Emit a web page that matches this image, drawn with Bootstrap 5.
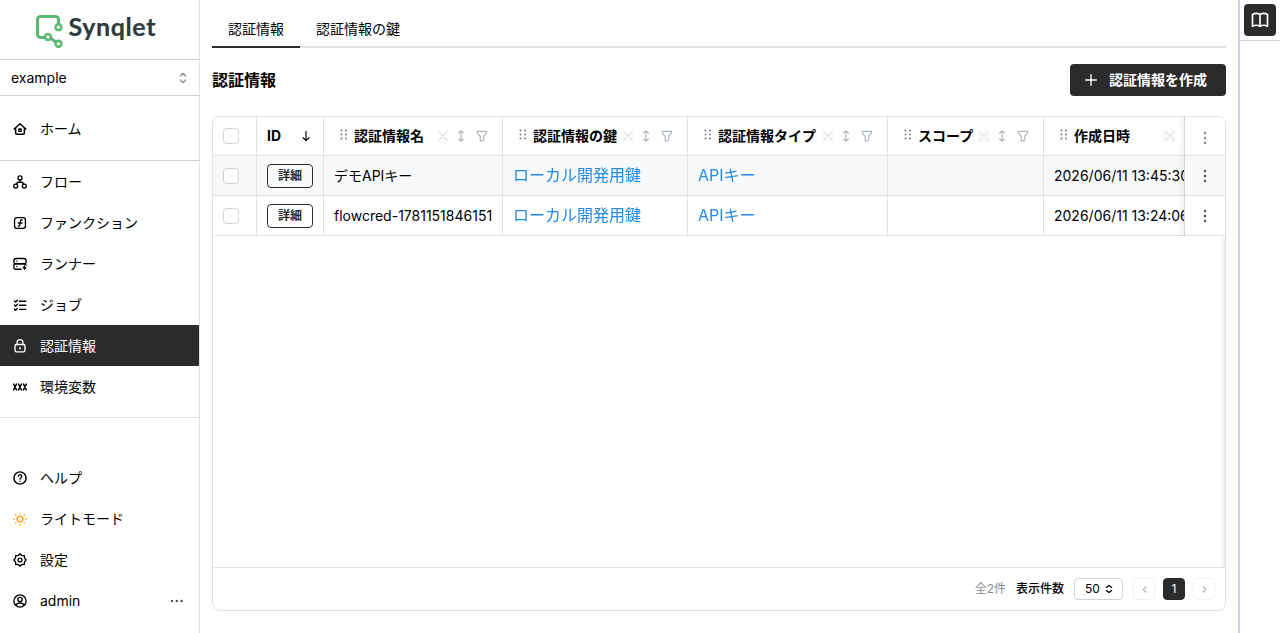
<!DOCTYPE html>
<html lang="ja">
<head>
<meta charset="utf-8">
<meta name="viewport" content="width=device-width, initial-scale=1">
<title>Synqlet</title>
<link href="https://cdn.jsdelivr.net/npm/bootstrap@5.3.0/dist/css/bootstrap.min.css" rel="stylesheet">
<style>
body{font-family:Inter,"Noto Sans CJK JP",sans-serif;font-size:14px;line-height:20px;color:#000;background:#fff}
svg{flex:none;display:block}
.ico{width:16px;height:16px;fill:none;stroke:currentColor;stroke-width:2;stroke-linecap:round;stroke-linejoin:round}
.side{width:200px;border-right:1px solid #dee2e6}
.brand{height:60px;border-bottom:1px solid #ced1da}
.proj{height:36px;border-bottom:1px solid #ced1da;padding:0 8px 0 11px}
.navrow{height:41px;padding:0 13px;gap:13px;color:#000;text-decoration:none}
.navrow .ico{width:14px;height:14px;stroke-width:2.3}
.navrow.active{background:#2b2b2b;color:#fff}
.home-sec{height:65px;border-bottom:1px solid #ced1da;padding-top:12px}
.main-sec{height:257px;border-bottom:1px solid #dee2e6}
.foot-sec{padding-bottom:12px}
.content-area{padding:12px 12px 22px}
.tabbar{height:36px;border-bottom:2px solid #dee2e6}
.tabbar a{height:36px;padding:7px 16px 0;color:#000;text-decoration:none}
.tabbar a.active{border-bottom:2px solid #2b2b2b}
.headline{height:68px;padding-bottom:4px}
.headline h1{font-size:16px;font-weight:700;line-height:24px}
.btn-create{height:32px;width:156px;background:#2b2b2b;color:#fff;border-radius:4px;font-size:14px;font-weight:700;line-height:20px;padding:0 0 0 12px;gap:10px}
.grid-box{border:1px solid #dee2e6;border-radius:8px}
.grid-scroll{overflow:hidden;box-shadow:inset -5px 0 4px -3px rgba(0,0,0,.09)}
.dt{table-layout:fixed;width:1058px;border-collapse:separate;border-spacing:0}
.dt th,.dt td{height:40px;padding:0 10px;border-right:1px solid #dee2e6;border-bottom:1px solid #dee2e6;white-space:nowrap;overflow:hidden;background:#fff;vertical-align:middle}
.dt th{height:39px;font-weight:700}
.dt .alt td{background:#f8f9fb}
.dt .pin{position:sticky;right:0;border-right:0;border-left:1px solid #dee2e6;padding:0;overflow:visible}
.dt .pin:before{content:"";position:absolute;right:100%;top:0;bottom:-1px;width:7px;background:linear-gradient(to left,rgba(0,0,0,.06),transparent)}
.dt .check{border:1px solid #ced4da;border-radius:4px;width:16px;height:16px;margin:1px 0 0;display:block}
.dt th .check{margin:-1px 0 0}
.dt .link{font-size:16px;color:#228be6;text-decoration:none;line-height:24px;position:relative;top:-1px}
.btn-detail{border:1px solid #2b2b2b;border-radius:4px;width:46px;height:24px;font-size:12px;font-weight:600;line-height:21px;padding:0;color:#2b2b2b;display:block}
.grip{color:#777;margin:-2px 6px 0 6px}
.clearer{width:14px;height:14px;background:#fcfcfc;color:#dedede}
.hic{color:#adb5bd}
.hic .h14{width:14px;height:14px;margin-right:3px}
.hic .srt{margin:0 7px 0 4px}
.pager{height:43px;border-top:1px solid #dee2e6;padding-right:10px;font-size:12px;line-height:18px}
.psize{border:1px solid #ced4da;border-radius:4px;width:49px;height:22px;padding-left:10px;gap:3px}
.pbtn{width:22px;height:22px;border-radius:4px;border:1px solid #f1f3f5;color:#adb5bd}
.pbtn .ico{width:15px;height:15px}
.pbtn.on{background:#2b2b2b;border-color:#2b2b2b;color:#fff}
.rail{width:42px;border-left:2px solid #ced1da}
.rail-top{height:41px;border-bottom:1px solid #ced4da;padding:4px}
.rail-btn{width:32px;height:32px;border-radius:4px;background:#2b2b2b;color:#fff}
</style>
</head>
<body class="overflow-hidden">
<svg width="0" height="0" class="position-absolute" aria-hidden="true">
<symbol id="sel" viewBox="0 0 24 24"><path d="M8 9l4-4 4 4M16 15l-4 4-4-4"/></symbol>
<symbol id="selw" viewBox="0 0 16 16"><path d="M4.500 5.900 8 3.200l3.500 2.700M4.500 10.100 8 12.800l3.500-2.700"/></symbol>
<symbol id="grip" viewBox="0 0 8 12"><g fill="currentColor" stroke="none"><circle cx="1.500" cy="1.500" r=".95"/><circle cx="6" cy="1.500" r=".95"/><circle cx="1.500" cy="5.500" r=".95"/><circle cx="6" cy="5.500" r=".95"/><circle cx="1.500" cy="9.500" r=".95"/><circle cx="6" cy="9.500" r=".95"/></g></symbol>
<symbol id="x" viewBox="0 0 24 24"><path d="M19 5 5 19M5 5l14 14"/></symbol>
<symbol id="sort" viewBox="0 0 24 24"><path d="M8 7l4-4 4 4M8 17l4 4 4-4M12 3v18"/></symbol>
<symbol id="filter" viewBox="0 0 24 24"><path d="M4 4h16v2.200a2 2 0 0 1-.600 1.400L15 12v7l-6 2v-8.500L4.500 7.600A2 2 0 0 1 4 6.200z"/></symbol>
<symbol id="dots" viewBox="0 0 24 24"><g fill="currentColor" stroke="none"><circle cx="12" cy="4.500" r="1.900"/><circle cx="12" cy="12" r="1.900"/><circle cx="12" cy="19.500" r="1.900"/></g></symbol>
</svg>
<div class="d-flex vh-100">
  <aside class="side d-flex flex-column flex-shrink-0">
    <div class="brand">
      <svg width="199" height="59" fill="none" stroke="#5bb974" stroke-width="3.200" stroke-linecap="round" stroke-linejoin="round">
        <path d="M58.500 23v-3.500a3 3 0 0 0-3-3h-15a3 3 0 0 0-3 3v15a3 3 0 0 0 3 3h4M51 38.500l4 3"/>
        <g stroke-width="2.400" fill="#fff"><circle cx="58.500" cy="27.200" r="3"/><circle cx="48" cy="37" r="3"/><circle cx="58.500" cy="43.800" r="3"/></g>
        <text x="68.500" y="36" fill="#2d3b3f" stroke="#2d3b3f" stroke-width=".2" font-family="Lato" font-weight="700" font-size="25" textLength="87">Synqlet</text>
      </svg>
    </div>
    <div class="proj d-flex align-items-center justify-content-between"><span>example</span><svg class="ico" style="color:#868e96"><use href="#sel"/></svg></div>
    <nav class="home-sec">
      <a class="navrow d-flex align-items-center" href="#"><svg class="ico" viewBox="0 0 24 24"><path d="M2 12 12 3l10 9M4.500 10.500V19a2 2 0 0 0 2 2h11a2 2 0 0 0 2-2v-8.500" stroke-width="2.600"/><rect x="10" y="12" width="4" height="4"/></svg><span>ホーム</span></a>
    </nav>
    <nav class="main-sec">
      <a class="navrow d-flex align-items-center" href="#"><svg class="ico" viewBox="0 0 24 24"><circle cx="12" cy="5" r="3.400"/><circle cx="4.600" cy="19" r="3.400"/><circle cx="19.400" cy="19" r="3.400"/><path d="M12 8.500V12M5.500 15.500C6.500 13 9 12 12 12s5.500 1 6.500 3.500"/></svg><span>フロー</span></a>
      <a class="navrow d-flex align-items-center" href="#"><svg class="ico" viewBox="0 0 24 24"><rect x="2.700" y="2.700" width="18.600" height="18.600" rx="4"/><path d="M9 17.500c2 .5 2.500-1 2.700-2.500l1-6c.2-1.800 1-2.800 3-2.500M9 12h6.500"/></svg><span>ファンクション</span></a>
      <a class="navrow d-flex align-items-center" href="#"><svg class="ico" viewBox="0 0 24 24"><rect x="1.500" y="2.500" width="21" height="9" rx="3.500"/><path d="M14 21H5A3.500 3.500 0 0 1 1.500 17.500V15A3.500 3.500 0 0 1 5 11.500h14a3.500 3.500 0 0 1 3.500 2.500M6.500 7v.1M6.500 16.200v.1"/><path d="M20 15v3h2.500L19.500 22v-3H17.500z" fill="currentColor" stroke-width="1.500"/></svg><span>ランナー</span></a>
      <a class="navrow d-flex align-items-center" href="#"><svg class="ico" viewBox="0 0 24 24"><path d="M11 5.500h11M11 12.500h11M11 19.500h11M2.500 5 4.500 7 7.500 3.800M2.500 12l2 2 3-3.200M2.500 19l2 2 3-3.200"/></svg><span>ジョブ</span></a>
      <a class="navrow active d-flex align-items-center" href="#"><svg class="ico" viewBox="0 0 24 24"><rect x="3.500" y="9.500" width="17" height="12.500" rx="2.500"/><path d="M7 9.500V6.200a5 5 0 0 1 10 0v3.300"/><circle cx="12" cy="16" r=".7" fill="currentColor"/></svg><span>認証情報</span></a>
      <a class="navrow d-flex align-items-center" href="#"><svg class="ico" viewBox="0 0 24 24"><path d="m1 7 5 10M6 7 1 17M9.500 7l5 10M14.500 7l-5 10M18 7l5 10M23 7l-5 10" stroke-width="2.600"/></svg><span>環境変数</span></a>
    </nav>
    <nav class="foot-sec mt-auto">
      <a class="navrow d-flex align-items-center" href="#"><svg class="ico" viewBox="0 0 24 24"><circle cx="12" cy="12" r="10.500" stroke-width="2.500"/><path d="M9.300 9.300a2.800 2.800 0 1 1 4.300 2.300c-1 .7-1.600 1.200-1.600 2.400M12 17.300v.1"/></svg><span>ヘルプ</span></a>
      <a class="navrow d-flex align-items-center" href="#"><svg class="ico" viewBox="0 0 24 24" style="color:#fd9a10"><circle cx="12" cy="12" r="5"/><path d="M12 1.500v.8M12 21.700v.8M1.500 12h.8M21.700 12h.8M4.500 4.500l.5.500M19 19l.5.500M4.500 19.500l.5-.5M19 5l.5-.5"/></svg><span>ライトモード</span></a>
      <a class="navrow d-flex align-items-center" href="#"><svg class="ico" viewBox="0 0 24 24"><path d="m12 1.500 3.200 2.800 4.300.200.200 4.300L22.500 12l-2.800 3.200-.2 4.300-4.300.200L12 22.500l-3.200-2.800-4.300-.2-.2-4.300L1.500 12l2.800-3.200.2-4.300 4.300-.2z"/><circle cx="12" cy="12" r="3.300"/></svg><span>設定</span></a>
      <a class="navrow d-flex align-items-center" href="#"><svg class="ico" viewBox="0 0 24 24"><circle cx="12" cy="12" r="10.500"/><circle cx="12" cy="9.500" r="3.700"/><path d="M5 18.500c2-2.300 4.500-3 7-3s5 .7 7 3"/></svg><span>admin</span><svg class="ms-auto" width="16" height="16" viewBox="0 0 16 16" fill="#555" style="margin-right:1px"><circle cx="3" cy="8" r="1.200"/><circle cx="7.800" cy="8" r="1.200"/><circle cx="12.600" cy="8" r="1.200"/></svg></a>
    </nav>
  </aside>

  <main class="content-area d-flex flex-column flex-grow-1" style="min-width:0">
    <div class="tabbar d-flex flex-shrink-0"><a class="active" href="#">認証情報</a><a href="#">認証情報の鍵</a></div>
    <div class="headline d-flex align-items-center justify-content-between flex-shrink-0">
      <h1 class="m-0">認証情報</h1>
      <button class="btn btn-create d-flex align-items-center"><svg class="ico" viewBox="0 0 24 24"><path d="M12 4v16M4 12h16" stroke-width="2"/></svg><span>認証情報を作成</span></button>
    </div>
    <div class="grid-box d-flex flex-column flex-grow-1 overflow-hidden">
      <div class="grid-scroll flex-grow-1">
        <table class="dt">
          <colgroup><col style="width:44px"><col style="width:67px"><col style="width:179px"><col style="width:185px"><col style="width:200px"><col style="width:156px"><col style="width:186px"><col style="width:41px"></colgroup>
          <thead><tr>
            <th><input type="checkbox" class="check form-check-input"></th>
            <th><div class="d-flex align-items-center justify-content-between"><span>ID</span><svg class="ico" viewBox="0 0 24 24" style="width:14px"><path d="M12 4v16M7 15l5 5 5-5"/></svg></div></th>
            <th><div class="d-flex align-items-center"><svg class="grip" width="8" height="12"><use href="#grip"/></svg><span>認証情報名</span><span class="hic ms-auto d-flex align-items-center"><svg class="ico clearer"><use href="#x"/></svg><svg class="ico h14 srt"><use href="#sort"/></svg><svg class="ico h14"><use href="#filter"/></svg></span></div></th>
            <th><div class="d-flex align-items-center"><svg class="grip" width="8" height="12"><use href="#grip"/></svg><span>認証情報の鍵</span><span class="hic ms-auto d-flex align-items-center"><svg class="ico clearer"><use href="#x"/></svg><svg class="ico h14 srt"><use href="#sort"/></svg><svg class="ico h14"><use href="#filter"/></svg></span></div></th>
            <th><div class="d-flex align-items-center"><svg class="grip" width="8" height="12"><use href="#grip"/></svg><span>認証情報タイプ</span><span class="hic ms-auto d-flex align-items-center"><svg class="ico clearer"><use href="#x"/></svg><svg class="ico h14 srt"><use href="#sort"/></svg><svg class="ico h14"><use href="#filter"/></svg></span></div></th>
            <th><div class="d-flex align-items-center"><svg class="grip" width="8" height="12"><use href="#grip"/></svg><span>スコープ</span><span class="hic ms-auto d-flex align-items-center"><svg class="ico clearer"><use href="#x"/></svg><svg class="ico h14 srt"><use href="#sort"/></svg><svg class="ico h14"><use href="#filter"/></svg></span></div></th>
            <th><div class="d-flex align-items-center"><svg class="grip" width="8" height="12"><use href="#grip"/></svg><span>作成日時</span><span class="hic ms-auto d-flex align-items-center"><svg class="ico clearer"><use href="#x"/></svg><svg class="ico h14 srt"><use href="#sort"/></svg><svg class="ico h14"><use href="#filter"/></svg></span></div></th>
            <th class="pin"><svg class="ico mx-auto" style="color:#868e96;margin-top:4px"><use href="#dots"/></svg></th>
          </tr></thead>
          <tbody>
            <tr class="alt"><td><input type="checkbox" class="check form-check-input"></td><td><button class="btn btn-detail">詳細</button></td><td>デモAPIキー</td><td><a class="link" href="#">ローカル開発用鍵</a></td><td><a class="link" href="#">APIキー</a></td><td></td><td>2026/06/11 13:45:30</td><td class="pin"><svg class="ico mx-auto" style="color:#555"><use href="#dots"/></svg></td></tr>
            <tr><td><input type="checkbox" class="check form-check-input"></td><td><button class="btn btn-detail">詳細</button></td><td>flowcred-1781151846151</td><td><a class="link" href="#">ローカル開発用鍵</a></td><td><a class="link" href="#">APIキー</a></td><td></td><td>2026/06/11 13:24:06</td><td class="pin"><svg class="ico mx-auto" style="color:#555"><use href="#dots"/></svg></td></tr>
          </tbody>
        </table>
      </div>
      <div class="pager d-flex align-items-center justify-content-end flex-shrink-0">
        <span style="color:#868e96;margin-right:10px">全2件</span><span style="font-weight:500;margin-right:10px">表示件数</span>
        <div class="psize d-flex align-items-center"><span>50</span><svg class="ico" style="width:12px;height:12px;stroke-width:1.700"><use href="#selw"/></svg></div>
        <div class="d-flex" style="margin-left:10px;gap:8px">
          <span class="pbtn d-flex align-items-center justify-content-center"><svg class="ico" viewBox="0 0 24 24"><path d="m14 8-4 4 4 4"/></svg></span>
          <span class="pbtn on d-flex align-items-center justify-content-center">1</span>
          <span class="pbtn d-flex align-items-center justify-content-center"><svg class="ico" viewBox="0 0 24 24"><path d="m10 8 4 4-4 4"/></svg></span>
        </div>
      </div>
    </div>
  </main>

  <aside class="rail flex-shrink-0">
    <div class="rail-top"><div class="rail-btn d-flex align-items-center justify-content-center"><svg class="ico" viewBox="0 0 24 24" style="width:20px;height:20px"><path d="M3 19.500V5.500c2.500-1.500 6.500-1.500 9 0 2.500-1.500 6.500-1.500 9 0v14c-2.500-1.300-6.500-1.300-9 0-2.500-1.300-6.500-1.300-9 0zM12 5.500v14"/></svg></div></div>
  </aside>
</div>
<script src="https://cdn.jsdelivr.net/npm/bootstrap@5.3.0/dist/js/bootstrap.bundle.min.js"></script>
</body>
</html>
